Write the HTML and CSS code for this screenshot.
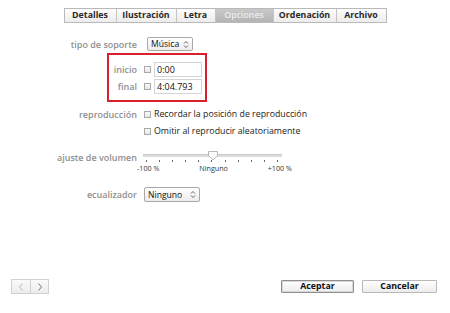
FILE: index.html
```html
<!DOCTYPE html>
<html lang="es">
<head>
<meta charset="utf-8">
<link rel="stylesheet" href="styles.css">
</head>
<body>
<div class="page">
  <div class="tabs">
    <div class="tab">Detalles</div>
    <div class="tab">Ilustración</div>
    <div class="tab">Letra</div>
    <div class="tab sel">Opciones</div>
    <div class="tab">Ordenación</div>
    <div class="tab">Archivo</div>
  </div>

  <div class="row r-tipo">
    <div class="lbl">tipo de soporte</div>
    <div class="select sel-musica">Música
      <svg class="updown" viewBox="0 0 6 9" width="6" height="9"><path d="M1 3.5 L3 1.5 L5 3.5 M1 5.5 L3 7.5 L5 5.5" fill="none" stroke="#555" stroke-width="0.9"/></svg>
    </div>
  </div>

  <div class="redbox">
    <div class="row r-in">
      <div class="lbl lbl-sm">inicio</div>
      <span class="cb"></span>
      <div class="field">0:00</div>
    </div>
    <div class="row r-fin">
      <div class="lbl lbl-sm">final</div>
      <span class="cb"></span>
      <div class="field">4:04.793</div>
    </div>
  </div>

  <div class="row r-rep">
    <div class="lbl">reproducción</div>
    <span class="cb"></span>
    <span class="cbtext">Recordar la posición de reproducción</span>
  </div>
  <div class="row r-omit">
    <div class="lbl"></div>
    <span class="cb"></span>
    <span class="cbtext">Omitir al reproducir aleatoriamente</span>
  </div>

  <div class="row r-vol">
    <div class="lbl lbl-vol">ajuste de volumen</div>
    <div class="slider">
      <div class="track"></div>
      <div class="ticks">
        <i></i><i></i><i></i><i></i><i></i><i></i><i></i><i></i><i></i><i></i><i></i>
      </div>
      <svg class="thumb" viewBox="0 0 12 10" width="12" height="10"><path d="M1.5 0.5 H10.5 V4.5 L6 9 L1.5 4.5 Z" fill="#fbfbfb" stroke="#b5b5b5" stroke-width="1"/></svg>
      <div class="slabels"><span>-100 %</span><span>Ninguno</span><span>+100 %</span></div>
    </div>
  </div>

  <div class="row r-eq">
    <div class="lbl">ecualizador</div>
    <div class="select sel-eq">Ninguno
      <svg class="updown" viewBox="0 0 6 9" width="6" height="9"><path d="M1 3.5 L3 1.5 L5 3.5 M1 5.5 L3 7.5 L5 5.5" fill="none" stroke="#555" stroke-width="0.9"/></svg>
    </div>
  </div>

  <div class="footer">
    <div class="nav">
      <div class="navbtn prev"><svg viewBox="0 0 8 10" width="8" height="10"><path d="M5.5 1.5 L2.5 5 L5.5 8.5" fill="none" stroke="#b8b8b8" stroke-width="1"/></svg></div>
      <div class="navbtn next"><svg viewBox="0 0 8 10" width="8" height="10"><path d="M2.5 1.5 L5.5 5 L2.5 8.5" fill="none" stroke="#777" stroke-width="1"/></svg></div>
    </div>
    <div class="btns">
      <div class="btn default">Aceptar</div>
      <div class="btn">Cancelar</div>
    </div>
  </div>
</div>
</body>
</html>
```

FILE: styles.css
```css
* { box-sizing: border-box; }
html, body { margin: 0; padding: 0; background: #fff; }
body {
  font-family: "Open Sans", "Liberation Sans", sans-serif;
  font-size: 8.5px;
  color: #222;
}
.page {
  width: 450px;
  height: 313px;
  display: flex;
  flex-direction: column;
}

/* tabs */
.tabs {
  margin: 8px auto 0;
  display: grid;
  grid-template-columns: 51px 60px 39px 58px 63px 50px;
  height: 15px;
  border: 1px solid #b9b9b9;
  background: linear-gradient(#fdfdfd, #ececec);
}
.tab {
  font-weight: 700;
  font-size: 8.8px;
  text-align: center;
  line-height: 13px;
  color: #2a2a2a;
  border-left: 1px solid #c4c4c4;
}
.tab:first-child { border-left: none; }
.tab.sel {
  background: linear-gradient(#c9c9c9, #b4b4b4);
  color: #ececec;
  font-weight: 600;
}

/* form rows */
.row {
  display: flex;
  align-items: center;
}
.lbl {
  width: 137px;
  flex: none;
  text-align: right;
  font-weight: 600;
  font-size: 9px;
  color: #8f8f8f;
  margin-right: 7px;
  white-space: nowrap;
}
.lbl-sm { width: 28px; }

.select {
  display: flex;
  align-items: center;
  height: 14px;
  border: 1px solid #a9a9a9;
  border-radius: 2px;
  background: linear-gradient(#ffffff, #ececec);
  padding: 0 3px 0 3px;
  font-size: 8.6px;
  color: #111;
  justify-content: space-between;
}
.updown { display: block; flex: none; }
.r-tipo { margin-top: 14px; height: 14px; }
.sel-musica { width: 46px; margin-left: 3px; }
.sel-eq { width: 56px; height: 15px; }

.redbox {
  margin: 2px 0 0 107px;
  width: 100px;
  height: 49px;
  border: 2px solid #d9202c;
  padding-top: 7px;
}
.r-in { height: 15px; }
.r-fin { height: 15px; margin-top: 2px; }
.cb {
  width: 7px;
  height: 7px;
  flex: none;
  border: 1px solid #a8a8a8;
  background: linear-gradient(#fafafa, #e6e6e6);
  margin-right: 3px;
}
.field {
  width: 48px;
  height: 15px;
  border: 1px solid #d4d4d4;
  background: #fff;
  font-size: 9px;
  line-height: 13px;
  padding-left: 2px;
  color: #111;
}

.r-rep { margin-top: 5px; height: 14px; }
.r-omit { margin-top: 3px; height: 14px; }
.cbtext { font-size: 8.8px; color: #222; white-space: nowrap; }

/* slider */
.r-vol { margin-top: 13px; align-items: flex-start; }
.lbl-vol { line-height: 14px; }
.slider {
  position: relative;
  width: 150px;
  height: 24px;
  margin-left: -1px;
}
.track {
  position: absolute;
  left: 0;
  top: 3px;
  width: 139px;
  height: 3px;
  background: #dcdcdc;
  border-top: 1px solid #c9c9c9;
}
.ticks {
  position: absolute;
  left: 3px;
  top: 9px;
  width: 132px;
  display: flex;
  justify-content: space-between;
}
.ticks i {
  display: block;
  width: 1px;
  height: 2px;
  background: #666;
}
.thumb {
  position: absolute;
  left: 64px;
  top: 0;
}
.slabels {
  position: absolute;
  left: -6px;
  top: 13px;
  width: 155px;
  display: flex;
  justify-content: space-between;
  font-size: 7.2px;
  color: #333;
  line-height: 9px;
}

.r-eq { margin-top: 12px; height: 15px; }

/* footer */
.footer {
  margin-top: auto;
  margin-bottom: 19px;
  display: flex;
  justify-content: space-between;
  align-items: center;
  padding: 0 13px 0 11px;
}
.nav {
  display: flex;
  border: 1px solid #d0d0d0;
  background: linear-gradient(#fafafa, #ececec);
  height: 15px;
}
.navbtn {
  width: 18px;
  display: flex;
  align-items: center;
  justify-content: center;
}
.navbtn.next { border-left: 1px solid #d0d0d0; }
.btns { display: flex; gap: 8px; }
.btn {
  width: 75px;
  height: 13px;
  border: 1px solid #b8b8b8;
  background: linear-gradient(#ffffff, #ececec);
  font-weight: 700;
  font-size: 8.8px;
  text-align: center;
  line-height: 11px;
  color: #111;
  border-radius: 1px;
}
.btn.default { width: 73px; border: 1px solid #8e8e8e; box-shadow: inset 0 0 0 1px #d8d8d8; }
```
